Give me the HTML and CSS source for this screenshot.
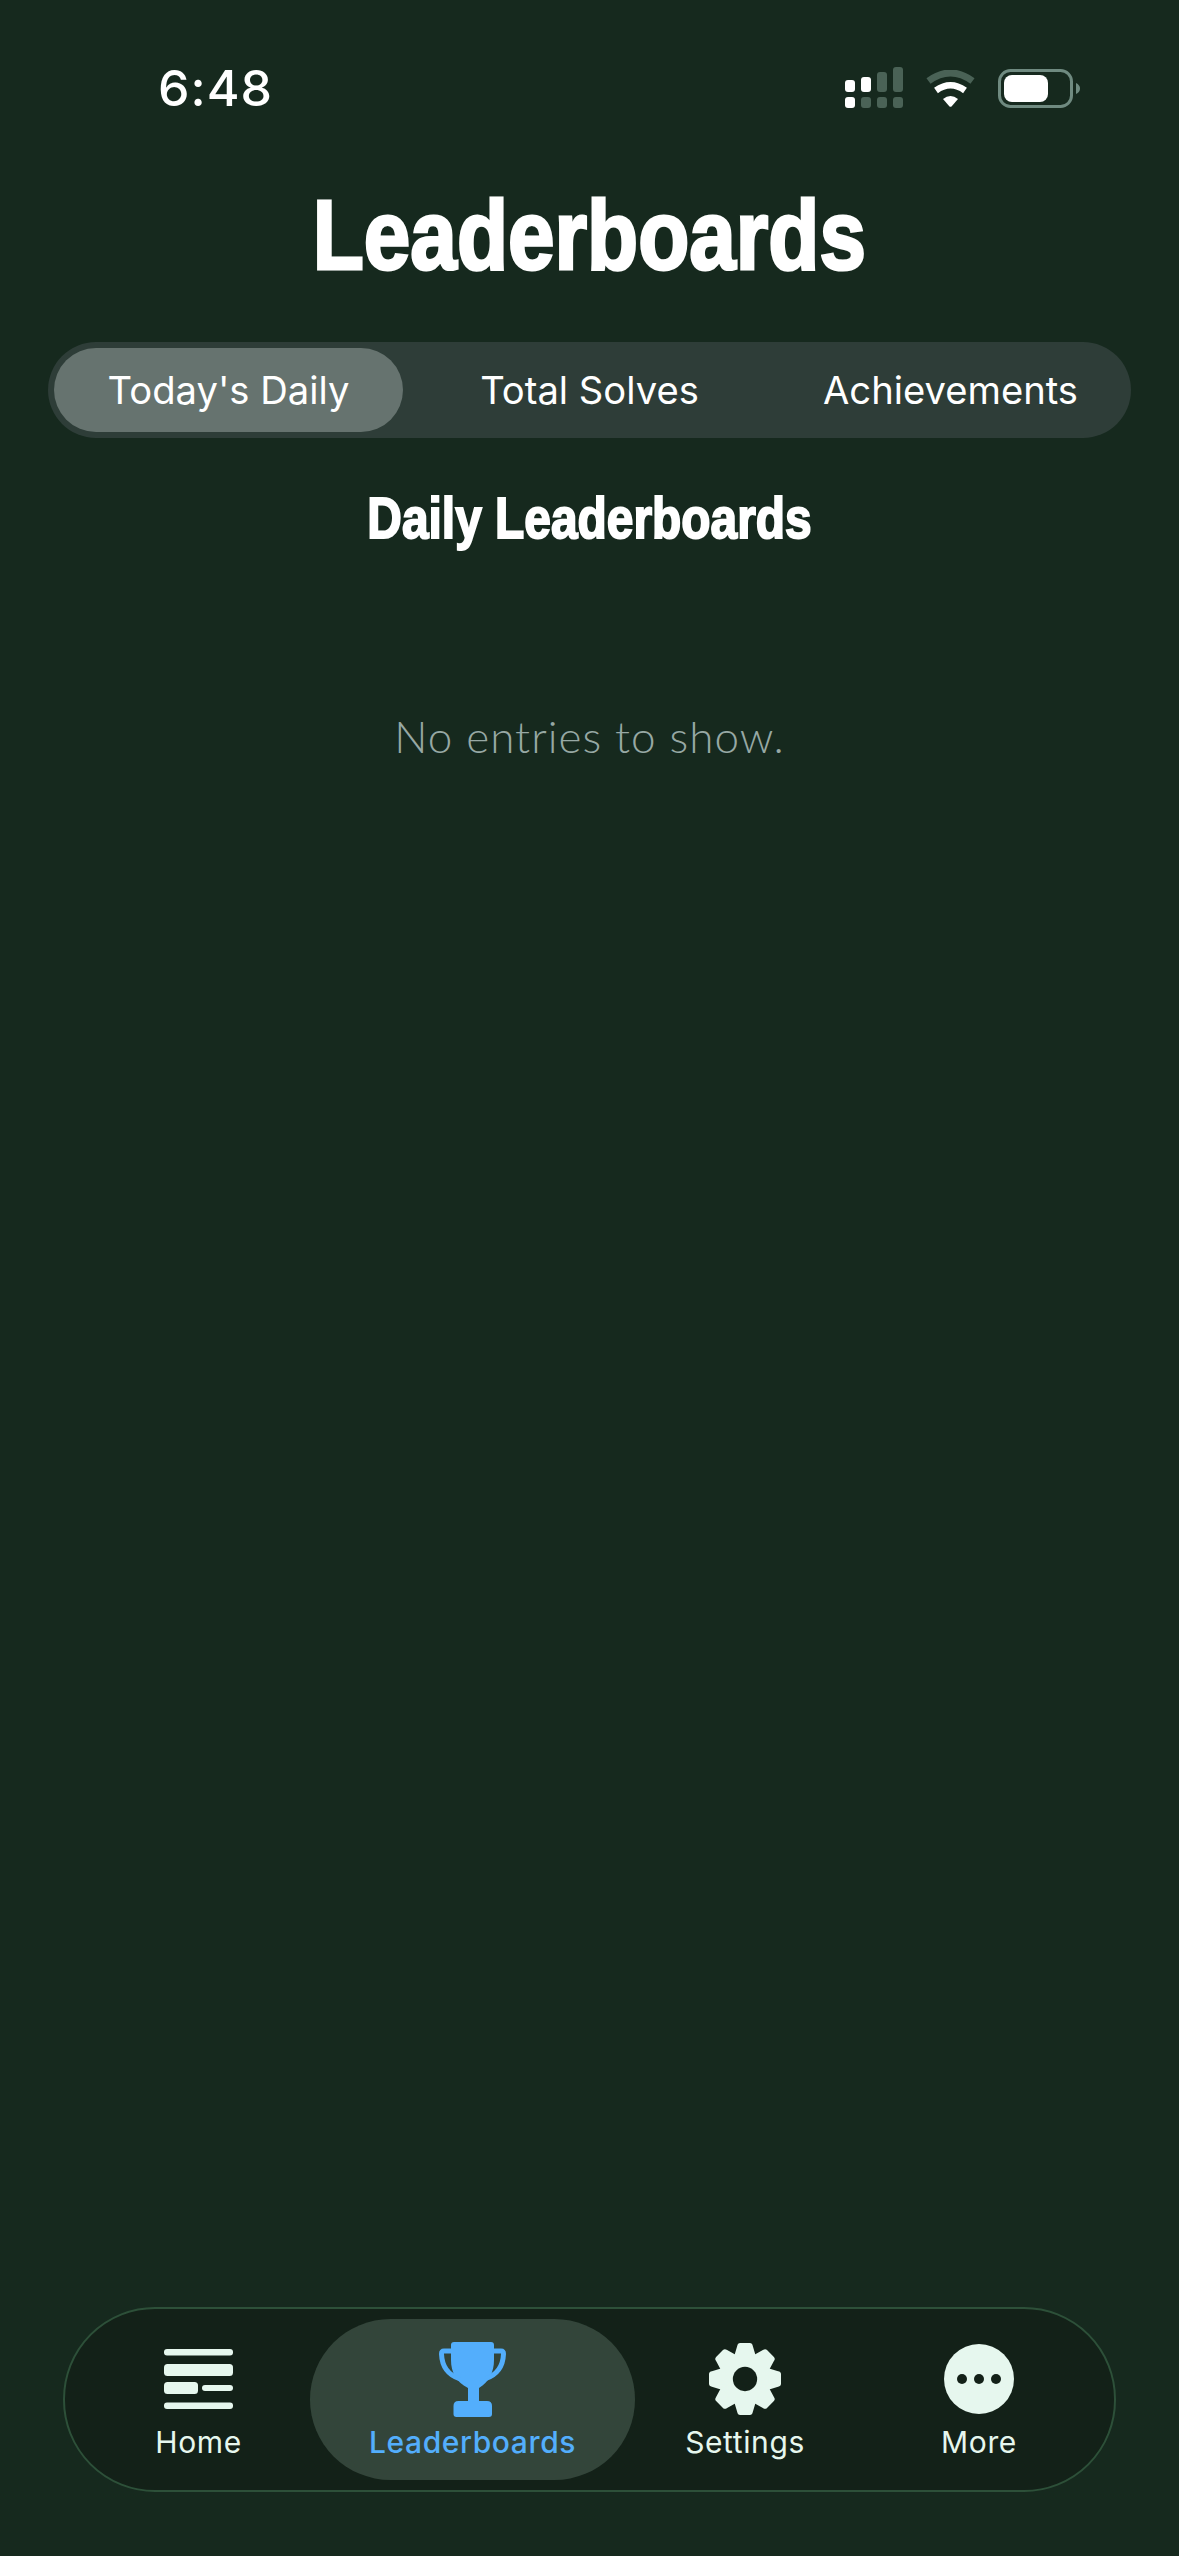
FILE: index.html
```html
<!DOCTYPE html>
<html lang="en">

<head>
	<meta charset="UTF-8">
	<meta name="viewport" content="width=device-width, initial-scale=1.0">
	<title>Leaderboards</title>
	<link rel="stylesheet" href="styles.css">
</head>

<body>
	<div class="status-bar">
		<span class="clock">6:48</span>
		<div class="status-icons">
			<svg class="signal" width="58" height="42" viewBox="0 0 58 42">
				<rect x="0" y="13" width="10" height="12" rx="3" fill="#fff" />
				<rect x="0" y="30" width="10" height="11" rx="3" fill="#fff" />
				<rect x="16" y="10" width="10" height="15" rx="3" fill="#fff" />
				<rect x="16" y="30" width="10" height="11" rx="3" fill="#4a6256" />
				<rect x="32" y="5" width="10" height="20" rx="3" fill="#4a6256" />
				<rect x="32" y="30" width="10" height="11" rx="3" fill="#4a6256" />
				<rect x="48" y="0" width="10" height="25" rx="3" fill="#4a6256" />
				<rect x="48" y="30" width="10" height="11" rx="3" fill="#4a6256" />
			</svg>
			<svg class="wifi" width="51" height="37" viewBox="0 0 51 37">
				<path d="M3.5 11 Q25.5 -5 47.5 11" fill="none" stroke="#4a6256" stroke-width="7" />
				<path d="M11 20.5 Q25.5 10 40 20.5" fill="none" stroke="#fff" stroke-width="6.5" stroke-linejoin="round" />
				<path d="M18 29 Q25.5 23 33 29 L26.5 36.5 Q25.5 37 24.5 36.5Z" fill="#fff" />
			</svg>
			<svg class="battery" width="83" height="39" viewBox="0 0 83 39">
				<rect x="1.5" y="1.5" width="72" height="36" rx="11" fill="none" stroke="#6f8a80" stroke-width="3" />
				<rect x="6" y="6" width="44" height="27" rx="8" fill="#fff" />
				<path d="M78 14 Q82 16 82 19.5 Q82 23 78 25Z" fill="#6f8a80" />
			</svg>
		</div>
	</div>

	<h1 class="page-title">Leaderboards</h1>

	<div class="tabs">
		<div class="tab"><span class="tab-pill active">Today's Daily</span></div>
		<div class="tab"><span class="tab-pill">Total Solves</span></div>
		<div class="tab"><span class="tab-pill">Achievements</span></div>
	</div>

	<h2 class="section-title">Daily Leaderboards</h2>
	<p class="empty-text">No entries to show.</p>

	<nav class="bottom-nav">
		<div class="nav-item">
			<div class="nav-icon">
				<svg width="69" height="60" viewBox="0 0 69 60" fill="#e6f7ee">
					<rect x="0" y="0" width="69" height="6.5" rx="3" />
					<rect x="0" y="15" width="69" height="12" rx="3.5" />
					<rect x="0" y="33" width="34" height="12" rx="3.5" />
					<rect x="38" y="36" width="31" height="6" rx="3" />
					<rect x="0" y="53.5" width="69" height="6.5" rx="3" />
				</svg>
			</div>
			<span>Home</span>
		</div>
		<div class="nav-item active">
			<div class="nav-icon">
				<svg width="67" height="75" viewBox="0 0 67 75" fill="#53aefc">
					<path d="M12 3 Q12 0 15 0 H52 Q55 0 55 3 V18 C55 30 50 40 40 46 V59 H29 V46 C17 40 12 30 12 18Z" />
					<path d="M13 9 H5 Q2.500 9 2.500 12 C3 25 9 33 21 37 M54 9 H62 Q64.500 9 64.500 12 C64 25 58 33 46 37" fill="none" stroke="#53aefc" stroke-width="5" />
					<path d="M14.500 64 Q14.500 59 19.500 59 H48 Q53 59 53 64 V72 Q53 75 50 75 H17.500 Q14.500 75 14.500 72Z" />
				</svg>
			</div>
			<span>Leaderboards</span>
		</div>
		<div class="nav-item">
			<div class="nav-icon">
				<svg width="72" height="72" viewBox="-37 -37 74 74" fill="#e6f7ee">
					<circle r="27" />
					<path id="tooth" d="M-11 -24 L-8 -34 Q-7.500 -37 -5 -37 H5 Q7.500 -37 8 -34 L11 -24Z" />
					<use href="#tooth" transform="rotate(45)" />
					<use href="#tooth" transform="rotate(90)" />
					<use href="#tooth" transform="rotate(135)" />
					<use href="#tooth" transform="rotate(180)" />
					<use href="#tooth" transform="rotate(225)" />
					<use href="#tooth" transform="rotate(270)" />
					<use href="#tooth" transform="rotate(315)" />
					<circle r="12.500" fill="#132118" />
				</svg>
			</div>
			<span>Settings</span>
		</div>
		<div class="nav-item">
			<div class="nav-icon">
				<svg width="70" height="70" viewBox="0 0 70 70">
					<circle cx="35" cy="35" r="35" fill="#e6f7ee" />
					<circle cx="18" cy="35" r="5" fill="#132118" />
					<circle cx="35" cy="35" r="5" fill="#132118" />
					<circle cx="52" cy="35" r="5" fill="#132118" />
				</svg>
			</div>
			<span>More</span>
		</div>
	</nav>
</body>

</html>
```

FILE: styles.css
```css
* {
	margin: 0;
	padding: 0;
	box-sizing: border-box;
}

body {
	width: 1179px;
	height: 2556px;
	display: flex;
	flex-direction: column;
	align-items: center;
	background-color: #16291e;
	color: white;
	font-family: "Inter", sans-serif;
	overflow: hidden;
}

.status-bar {
	width: 100%;
	height: 180px;
	padding: 58px 98px 0 158px;
	display: flex;
	justify-content: space-between;
	align-items: flex-start;
}

.clock {
	font-size: 50px;
	font-weight: 500;
	line-height: 60px;
	letter-spacing: 1px;
}

.status-icons {
	display: flex;
	align-items: center;
	gap: 22px;
	padding-top: 9px;
}

.page-title {
	font-family: "Liberation Sans", sans-serif;
	font-size: 99px;
	font-weight: 700;
	line-height: 110px;
	-webkit-text-stroke: 3px white;
	/* no condensed heavy face installed, squeeze it */
	transform: scaleX(0.845);
}

.tabs {
	width: 1083px;
	height: 96px;
	margin-top: 52px;
	padding: 6px 0;
	display: grid;
	grid-template-columns: repeat(3, 1fr);
	background-color: #2e3d38;
	border-radius: 48px;
}

.tab {
	padding: 0 6px;
}

.tab-pill {
	display: flex;
	height: 100%;
	align-items: center;
	justify-content: center;
	font-size: 38.2px;
	border-radius: 42px;
}

.tab-pill.active {
	background-color: #66736f;
}

.section-title {
	margin-top: 48px;
	font-family: "Liberation Sans", sans-serif;
	font-size: 57px;
	font-weight: 700;
	line-height: 64px;
	-webkit-text-stroke: 2px white;
	transform: scaleX(0.84);
}

.empty-text {
	margin-top: 159px;
	font-family: "Lato", sans-serif;
	font-size: 44px;
	font-weight: 300;
	line-height: 54px;
	letter-spacing: 1px;
	color: #97a8a4;
}

.bottom-nav {
	width: 1053px;
	height: 185px;
	margin-top: auto;
	margin-bottom: 64px;
	padding: 10px 11px 10px 22px;
	display: grid;
	grid-template-columns: 223px 325px 220px 248px;
	background-color: #132118;
	border: 2px solid #2d5039;
	border-radius: 92px;
}

.nav-item {
	display: flex;
	flex-direction: column;
	align-items: center;
	gap: 6px;
	padding-top: 21px;
	font-size: 30px;
	line-height: 36px;
	letter-spacing: 0.6px;
	color: #e6f7ee;
}

.nav-icon {
	height: 78px;
	display: flex;
	align-items: center;
}

.nav-item.active {
	background-color: #33453a;
	border-radius: 81px;
	color: #53aefc;
	font-weight: 500;
}
```
